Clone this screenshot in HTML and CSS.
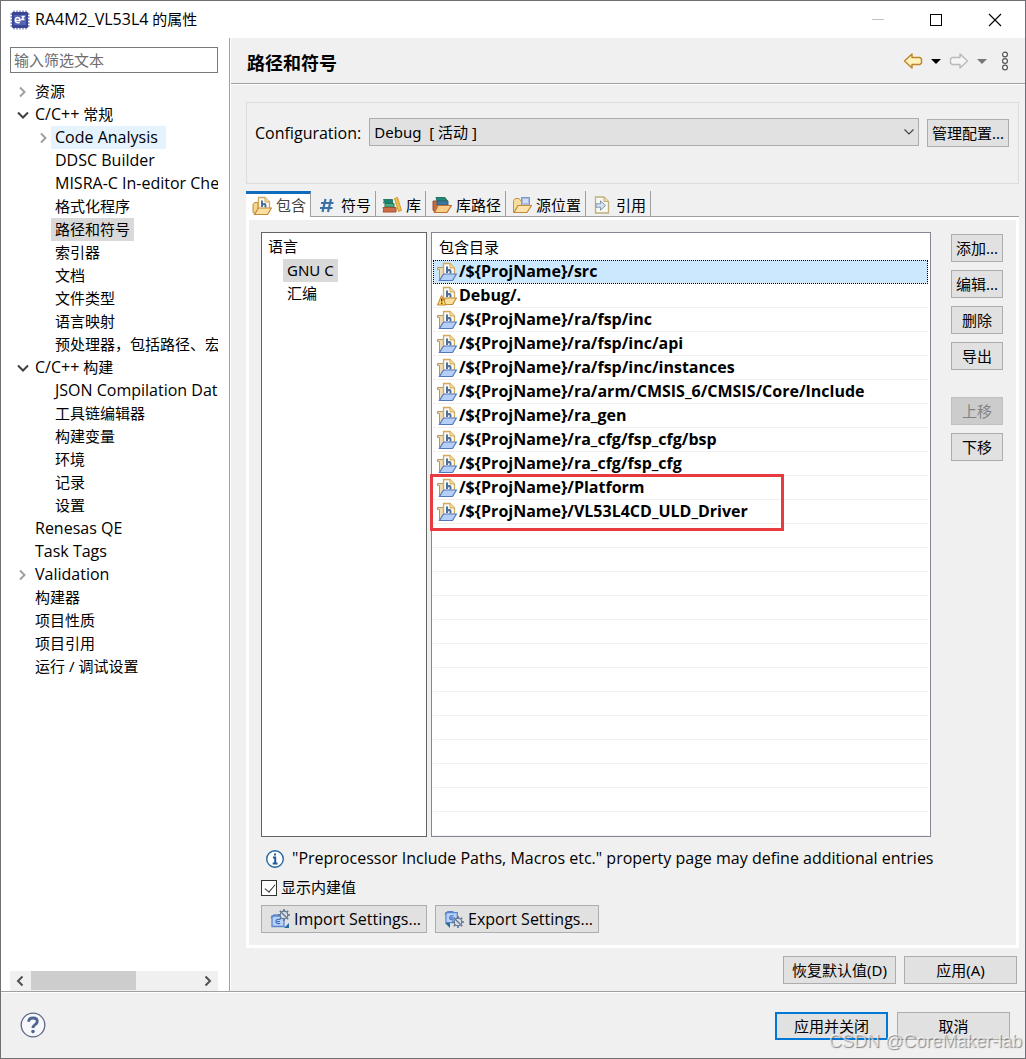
FILE: index.html
```html
<!DOCTYPE html>
<html lang="zh-CN">
<head>
  <meta charset="UTF-8" />
  <meta name="viewport" content="width=device-width, initial-scale=1.0"/>
  <title>RA4M2_VL53L4 的属性</title>
  <link rel="stylesheet" href="styles.css">
</head>
<body>
  <svg class="defs" width="0" height="0" aria-hidden="true">
    <symbol id="chev-right" viewBox="0 0 12 12"><path d="M3 1.5L7.5 6L3 10.5" fill="none" stroke="currentColor" stroke-width="2"/></symbol>
    <symbol id="chev-down" viewBox="0 0 12 12"><path d="M1 3.5L6 8.5L11 3.5" fill="none" stroke="currentColor" stroke-width="2"/></symbol>
    <symbol id="page-h" viewBox="0 0 20 20">
      <path d="M6.5 1.5H13L17.5 6V14H6.5Z" fill="#fdfbf3" stroke="#cfa95c" stroke-width="1.3"/>
      <path d="M13 1.5V6H17.5" fill="#f3dfa9" stroke="#cfa95c"/>
      <path d="M10 4.5V11M10 8.7Q13.5 6.8 13.5 9.5V11.5" fill="none" stroke="#4a6f9b" stroke-width="2"/>
    </symbol>
    <symbol id="inc-blue" viewBox="0 0 20 20">
      <path d="M.5 5.5H6.5V13L3.5 17.5H2.5V7.5H.5Z" fill="#ecdcb4" stroke="#b0986a"/>
      <use href="#page-h"/>
      <path d="M6.5 12H19.5L15.5 18.5H2.5Z" fill="#b4d0f8" stroke="#5577bd" stroke-width="1.2"/>
    </symbol>
    <symbol id="inc-gold" viewBox="0 0 20 20">
      <path d="M1 8.5L2.5 6.5H6V13L3 17.5L1 16.5Z" fill="#f3d58d" stroke="#b98d45"/>
      <use href="#page-h"/>
      <path d="M6.5 12H19.5L15.5 18.5H2.5Z" fill="#fbe0a0" stroke="#c08b3a" stroke-width="1.2"/>
    </symbol>
    <symbol id="inc-warn" viewBox="0 0 20 20">
      <use href="#page-h"/>
      <path d="M8 12H19.5L15.5 18.5H6Z" fill="#fbe0a0" stroke="#c08b3a" stroke-width="1.2"/>
      <path d="M4.5 9.5L9 19H.5Z" fill="#ffd869" stroke="#c5842b" stroke-linejoin="round"/>
      <path d="M4.7 12.5V15.5M4.7 16.5V18" stroke="#5a3208" stroke-width="1.3"/>
    </symbol>
    <symbol id="hash" viewBox="0 0 20 20"><path d="M8.5 4L5.5 17M14 4L11 17M4 8H16.5M3 13H15.5" fill="none" stroke="#3b72a5" stroke-width="2.2"/></symbol>
    <symbol id="books" viewBox="0 0 20 20">
      <path d="M1.5 4.5H10.5V8H1.5Q3 6 1.5 4.5Z" fill="#188473" stroke="#2c766c"/>
      <path d="M3 8.5H12V12H3Z" fill="#45ae83" stroke="#2b7759"/>
      <path d="M1 12.5H14V17H1Q2.5 15 1 12.5Z" fill="#cb6e45" stroke="#a5512f"/>
      <path d="M12.5 3.5L15.5 2.5L19.5 15.5L16.5 16.5Z" fill="#f2bd4b" stroke="#d39a35"/>
    </symbol>
    <symbol id="libpath" viewBox="0 0 20 20">
      <path d="M1 6H7V15L3 17.5L1 15Z" fill="#bf6c45" stroke="#97502f"/>
      <path d="M4 2.5H13L15.5 6H5Z" fill="#208b75" stroke="#2a6f63"/>
      <path d="M5 6H16V10H5Z" fill="#3e76a0" stroke="#315e7a"/>
      <path d="M6 10.5H19.5L15 17.5H2.5Z" fill="#f9cd88" stroke="#bd7035" stroke-width="1.2"/>
    </symbol>
    <symbol id="srcloc" viewBox="0 0 20 20">
      <path d="M1.5 17V5.5L3 3.5H7L9 6H16V16Z" fill="#f5dca0" stroke="#c19548"/>
      <rect x="9.5" y="2.5" width="8" height="8" fill="#a7bbe2" stroke="#7f98c6"/>
      <path d="M11 4H16V8H11Z" fill="#d0def6"/>
      <path d="M6 10.5H19.5L15 17.5H2Z" fill="#ffe3aa" stroke="#c08b3a" stroke-width="1.2"/>
    </symbol>
    <symbol id="refs" viewBox="0 0 20 20">
      <path d="M3.5 2H12L16.5 6.5V18H3.5Z" fill="#f9f8f0" stroke="#bfae7e" stroke-width="1.3"/>
      <path d="M12 2V6.5H16.5" fill="#e9d9a5" stroke="#bfae7e"/>
      <path d="M4 8.8H8.5V5.8L13.5 10.5L8.5 15.2V12.2H4Z" fill="#d8e3ee" stroke="#7f98ae"/>
    </symbol>
    <symbol id="gear-box" viewBox="0 0 20 20">
      <path d="M2 7H14V17.5H2Z" fill="#b7d1fa" stroke="#5b86cb" stroke-width="1.3"/>
      <path d="M1 9L4 6H10" fill="none" stroke="#5b86cb" stroke-width="1.5"/>
      <path d="M10.2 10.5Q6 9.5 6 12.5Q6 15 10.2 14.5M7 12.5H10" fill="none" stroke="#386dbb" stroke-width="1.2"/>
    </symbol>
    <symbol id="gear" viewBox="0 0 12 12">
      <path d="M6 0V12M0 6H12M1.8 1.8L10.2 10.2M10.2 1.8L1.8 10.2" stroke="#5f7590" stroke-width="1.6"/>
      <circle cx="6" cy="6" r="3.8" fill="#d7dee7" stroke="#5f7590" stroke-width="1.2"/>
      <path d="M3.5 3.5L8.5 8.5" stroke="#5f7590" stroke-width="1.3"/>
    </symbol>
  </svg>

  <div class="window">
    <header class="titlebar">
      <svg class="app-icon" viewBox="0 0 20 20">
        <path d="M4 .5V19.5M7 .5V19.5M10 .5V19.5M13 .5V19.5M16 .5V19.5M.5 4H19.5M.5 7H19.5M.5 10H19.5M.5 13H19.5M.5 16H19.5" stroke="#6d79b0" stroke-width="1.3"/>
        <rect x="2" y="2" width="16" height="16" rx="1" fill="#3a4799"/>
        <rect x="4" y="5" width="12" height="10" fill="#5665b2"/>
        <path d="M5.5 10.5H10Q10 7.5 7.7 7.5Q5.3 7.5 5.3 10.5Q5.3 13.3 9.7 12.5M11.5 6.5H14L11.8 9.5H14.5" fill="none" stroke="#fff" stroke-width="1.4"/>
      </svg>
      <span class="window-title"><span class="latin">RA4M2_VL53L4</span> 的属性</span>
      <button class="win-btn" aria-label="最小化" disabled><svg viewBox="0 0 14 14"><path d="M1 6.5H13" stroke="#c2c2c2"/></svg></button>
      <button class="win-btn" aria-label="最大化"><svg viewBox="0 0 14 14"><rect x="1.5" y="1.5" width="11" height="11" fill="none" stroke="#000"/></svg></button>
      <button class="win-btn" aria-label="关闭"><svg viewBox="0 0 14 14"><path d="M1 1L13 13M13 1L1 13" stroke="#000" stroke-width="1.1"/></svg></button>
    </header>

    <div class="content">
      <aside class="sidebar">
        <input class="filter" type="text" placeholder="输入筛选文本" aria-label="输入筛选文本">
        <ul class="tree">
          <li><svg class="arrow"><use href="#chev-right"/></svg><span class="item">资源</span></li>
          <li><svg class="arrow open"><use href="#chev-down"/></svg><span class="item"><span class="latin">C/C++</span> 常规</span>
            <ul>
              <li><svg class="arrow"><use href="#chev-right"/></svg><span class="item latin hover">Code Analysis</span></li>
              <li><span class="item latin">DDSC Builder</span></li>
              <li><span class="item latin">MISRA-C In-editor Checks</span></li>
              <li><span class="item">格式化程序</span></li>
              <li><span class="item selected">路径和符号</span></li>
              <li><span class="item">索引器</span></li>
              <li><span class="item">文档</span></li>
              <li><span class="item">文件类型</span></li>
              <li><span class="item">语言映射</span></li>
              <li><span class="item">预处理器，包括路径、宏</span></li>
            </ul>
          </li>
          <li><svg class="arrow open"><use href="#chev-down"/></svg><span class="item"><span class="latin">C/C++</span> 构建</span>
            <ul>
              <li><span class="item latin">JSON Compilation Database</span></li>
              <li><span class="item">工具链编辑器</span></li>
              <li><span class="item">构建变量</span></li>
              <li><span class="item">环境</span></li>
              <li><span class="item">记录</span></li>
              <li><span class="item">设置</span></li>
            </ul>
          </li>
          <li><span class="item latin">Renesas QE</span></li>
          <li><span class="item latin">Task Tags</span></li>
          <li><svg class="arrow"><use href="#chev-right"/></svg><span class="item latin">Validation</span></li>
          <li><span class="item">构建器</span></li>
          <li><span class="item">项目性质</span></li>
          <li><span class="item">项目引用</span></li>
          <li><span class="item">运行 / 调试设置</span></li>
        </ul>
        <div class="scrollbar">
          <button aria-label="向左滚动"><svg viewBox="0 0 12 12"><path d="M7.5 1.5L3 6L7.5 10.5" fill="none" stroke="#505050" stroke-width="2"/></svg></button>
          <div class="track"><div class="thumb"></div></div>
          <button aria-label="向右滚动"><svg viewBox="0 0 12 12"><path d="M3.5 1.5L8 6L3.5 10.5" fill="none" stroke="#505050" stroke-width="2"/></svg></button>
        </div>
      </aside>

      <main class="main">
        <div class="page-head">
          <h1>路径和符号</h1>
          <nav class="history">
            <button aria-label="后退"><svg width="20" height="18" viewBox="0 0 20 18"><path d="M1.5 9L9 2V5.5H17L18.5 7V11L17 12.5H9V16Z" fill="#fff2bd" stroke="#bd862c" stroke-width="1.5" stroke-linejoin="round"/></svg></button>
            <button aria-label="后退历史"><svg width="10" height="18" viewBox="0 0 10 18"><path d="M0 7H10L5 12Z" fill="#000"/></svg></button>
            <button aria-label="前进"><svg width="20" height="18" viewBox="0 0 20 18"><path d="M18.5 9L11 2V5.5H3L1.5 7V11L3 12.5H11V16Z" fill="#f5f5f5" stroke="#b9b9b9" stroke-width="1.4" stroke-linejoin="round"/></svg></button>
            <button aria-label="前进历史"><svg width="10" height="18" viewBox="0 0 10 18"><path d="M0 7H10L5 12Z" fill="#777"/></svg></button>
            <button class="more" aria-label="菜单"><svg width="8" height="20" viewBox="0 0 8 20"><g fill="#fff" stroke="#555" stroke-width="1.2"><circle cx="4" cy="3.5" r="2.4"/><circle cx="4" cy="10" r="2.4"/><circle cx="4" cy="16.5" r="2.4"/></g></svg></button>
          </nav>
        </div>

        <div class="page">
          <section class="config">
            <label class="latin" for="config">Configuration:</label>
            <div class="select-wrap">
              <select id="config"><option>Debug&nbsp; [ 活动 ]</option></select>
              <svg viewBox="0 0 12 12"><path d="M1.5 3.5L6 8L10.5 3.5" fill="none" stroke="#444" stroke-width="1.2"/></svg>
            </div>
            <button class="btn manage">管理配置...</button>
          </section>

          <div class="tabs" role="tablist">
            <button class="tab active" role="tab" aria-selected="true"><svg><use href="#inc-gold"/></svg>包含</button>
            <button class="tab" role="tab"><svg><use href="#hash"/></svg>符号</button>
            <button class="tab" role="tab"><svg><use href="#books"/></svg>库</button>
            <button class="tab" role="tab"><svg><use href="#libpath"/></svg>库路径</button>
            <button class="tab" role="tab"><svg><use href="#srcloc"/></svg>源位置</button>
            <button class="tab" role="tab"><svg><use href="#refs"/></svg>引用</button>
          </div>

          <section class="panel">
            <div class="lists">
              <div class="languages">
                <div class="lang-head">语言</div>
                <ul>
                  <li><span class="selected">GNU C</span></li>
                  <li><span>汇编</span></li>
                </ul>
              </div>
              <div class="includes">
                <table>
                  <thead><tr><th>包含目录</th></tr></thead>
                  <tbody class="latin">
                    <tr class="current"><td><svg><use href="#inc-blue"/></svg>/${ProjName}/src</td></tr>
                    <tr><td><svg><use href="#inc-warn"/></svg>Debug/.</td></tr>
                    <tr><td><svg><use href="#inc-blue"/></svg>/${ProjName}/ra/fsp/inc</td></tr>
                    <tr><td><svg><use href="#inc-blue"/></svg>/${ProjName}/ra/fsp/inc/api</td></tr>
                    <tr><td><svg><use href="#inc-blue"/></svg>/${ProjName}/ra/fsp/inc/instances</td></tr>
                    <tr><td><svg><use href="#inc-blue"/></svg>/${ProjName}/ra/arm/CMSIS_6/CMSIS/Core/Include</td></tr>
                    <tr><td><svg><use href="#inc-blue"/></svg>/${ProjName}/ra_gen</td></tr>
                    <tr><td><svg><use href="#inc-blue"/></svg>/${ProjName}/ra_cfg/fsp_cfg/bsp</td></tr>
                    <tr><td><svg><use href="#inc-blue"/></svg>/${ProjName}/ra_cfg/fsp_cfg</td></tr>
                    <tr><td><svg><use href="#inc-blue"/></svg>/${ProjName}/Platform</td></tr>
                    <tr><td><svg><use href="#inc-blue"/></svg>/${ProjName}/VL53L4CD_ULD_Driver</td></tr>
                  </tbody>
                </table>
                <div class="empty-rows"></div>
                <div class="marker"></div>
              </div>
              <div class="actions">
                <button class="btn">添加...</button>
                <button class="btn">编辑...</button>
                <button class="btn">删除</button>
                <button class="btn">导出</button>
                <button class="btn move" disabled>上移</button>
                <button class="btn">下移</button>
              </div>
            </div>

            <p class="info latin">
              <svg viewBox="0 0 20 20"><circle cx="10" cy="10" r="8.3" fill="#fff" stroke="#25669f" stroke-width="1.4"/><path d="M10 4.5V6.5M8 8.5H10.2V14M7.7 14.5H12.5" fill="none" stroke="#1a5b99" stroke-width="2"/></svg>
              "Preprocessor Include Paths, Macros etc." property page may define additional entries
            </p>
            <label class="builtin"><input type="checkbox" checked>显示内建值</label>
            <div class="transfer">
              <button class="btn latin"><svg viewBox="0 0 20 20"><use href="#gear-box" width="20" height="20"/><use href="#gear" x="8" y="0" width="12" height="12"/><path d="M19 14V19H14Z" fill="#276ba2"/></svg>Import Settings...</button>
              <button class="btn latin"><svg viewBox="0 0 20 20"><use href="#gear-box" x="0" y="-3" width="19" height="19"/><use href="#gear" x="8" y="7" width="12" height="12"/><path d="M1 14H6V19Z" fill="#276ba2"/></svg>Export Settings...</button>
            </div>
          </section>

          <div class="page-actions">
            <button class="btn">恢复默认值(D)</button>
            <button class="btn">应用(A)</button>
          </div>
        </div>
      </main>
    </div>

    <footer class="footer">
      <button class="help" aria-label="帮助"><svg viewBox="0 0 26 26"><circle cx="13" cy="13" r="11.8" fill="#f6f8fb" stroke="#5d6687" stroke-width="1.3"/><path d="M8.6 9.8Q8.8 6 13 6Q17.3 6 17.3 9.3Q17.3 11.2 15.2 12.6Q13 14 13 16" fill="none" stroke="#4f6690" stroke-width="2.8"/><circle cx="13" cy="19.5" r="1.8" fill="#4f6690"/></svg></button>
      <button class="btn primary">应用并关闭</button>
      <button class="btn">取消</button>
      <span class="watermark">CSDN @CoreMaker-lab</span>
    </footer>
  </div>
</body>
</html>
```

FILE: styles.css
```css
* {
  box-sizing: border-box;
}
body {
  margin: 0;
  font-family: "Noto Sans", "Noto Sans CJK SC", sans-serif;
  font-size: 15px;
  line-height: 23px;
  color: #000;
}
button, input, select {
  font: inherit;
  color: inherit;
}
button {
  padding: 0;
  border: none;
  background: none;
}
ul {
  list-style: none;
  margin: 0;
  padding: 0;
}
.defs {
  position: absolute;
}
.latin {
  font-family: "Open Sans", "Noto Sans", sans-serif;
  font-size: 16px;
}
.window {
  display: flex;
  flex-direction: column;
  min-height: 100vh;
  border: 1px solid #706f73;
  background: #f0f0f0;
}

/* title bar */
.titlebar {
  display: flex;
  align-items: center;
  height: 37px;
  padding-left: 9px;
  background: #fff;
}
.app-icon {
  width: 20px;
  height: 20px;
  margin-right: 5px;
}
.window-title {
  flex: 1;
}
.win-btn {
  display: flex;
  align-items: center;
  justify-content: center;
  width: 58px;
  height: 36px;
}
.win-btn svg {
  width: 14px;
  height: 14px;
}
.win-btn:last-child {
  width: 60px;
}

.content {
  flex: 1;
  display: flex;
}

/* tree */
.sidebar {
  display: flex;
  flex-direction: column;
  width: 229px;
  padding: 9px 11px 0 9px;
  background: #fff;
  border-right: 1px solid #a0a0a0;
}
.filter {
  width: 100%;
  height: 26px;
  padding: 0 3px;
  border: 1px solid #7a7a7a;
  border-radius: 0;
  background: #fff;
}
.filter::placeholder {
  color: #6d6d6d;
  opacity: 1;
}
.tree {
  flex: 1;
  margin-top: 7px;
  overflow: hidden;
  white-space: nowrap;
}
.tree li {
  position: relative;
  padding-left: 21px;
}
.tree ul li {
  padding-left: 20px;
}
.item {
  display: inline-block;
  height: 23px;
  padding: 0 4px;
  vertical-align: top;
}
.arrow {
  position: absolute;
  left: 7px;
  top: 6px;
  width: 12px;
  height: 12px;
  color: #a0a0a0;
}
.arrow.open {
  color: #404040;
}
.hover {
  padding-right: 8px;
  background: #e5f3ff;
}
.selected {
  background: #d9d9d9;
}
.scrollbar {
  display: flex;
  height: 20px;
  background: #f0f0f0;
}
.scrollbar button {
  width: 21px;
  display: flex;
  align-items: center;
  justify-content: center;
}
.scrollbar svg {
  width: 12px;
  height: 12px;
}
.track {
  flex: 1;
}
.thumb {
  width: 63%;
  height: 19px;
  background: #cdcdcd;
}

/* right side */
.main {
  flex: 1;
  min-width: 0;
  display: flex;
  flex-direction: column;
  border-left: 1px solid #fff;
}
.page-head {
  display: flex;
  align-items: center;
  justify-content: space-between;
  height: 46px;
  padding: 0 16px;
  border-bottom: 1px solid #a0a0a0;
  box-shadow: 0 1px #fff;
}
h1 {
  margin: 4px 0 0;
  font-size: 18px;
  line-height: 24px;
}
.history {
  display: flex;
  align-items: center;
  gap: 8px;
}
.history button, .history svg {
  display: block;
}
.history .more {
  margin-left: 6px;
}
.page {
  flex: 1;
  display: flex;
  flex-direction: column;
  padding: 18px 6px 7px 15px;
}
.config {
  display: flex;
  align-items: flex-start;
  gap: 8px;
  height: 82px;
  padding: 15px 9px 0 8px;
  border: 1px solid #dcdcdc;
}
.config label {
  margin-top: 4px;
}
.select-wrap {
  flex: 1;
  display: grid;
  align-items: center;
}
.select-wrap > * {
  grid-area: 1 / 1;
}
.select-wrap select {
  appearance: none;
  height: 28px;
  padding: 0 4px;
  border: 1px solid #adadad;
  border-radius: 0;
  background: #e1e1e1;
}
.select-wrap svg {
  justify-self: end;
  width: 12px;
  height: 12px;
  margin-right: 4px;
  pointer-events: none;
}
.btn {
  display: flex;
  align-items: center;
  justify-content: center;
  height: 28px;
  border: 1px solid #adadad;
  background: #e1e1e1;
  white-space: nowrap;
}
.btn:disabled {
  background: #ccc;
  border-color: #bfbfbf;
  color: #838383;
}
.manage {
  width: 82px;
  margin-top: 1px;
}

/* tabs */
.tabs {
  display: flex;
  height: 26px;
  margin-top: 7px;
  border-bottom: 1px solid #a0a0a0;
}
.tab {
  display: flex;
  align-items: center;
  gap: 4px;
  height: 25px;
  padding: 3px 4px 0 6px;
  border-right: 1px solid #a0a0a0;
}
.tab svg {
  width: 20px;
  height: 20px;
}
.tab.active {
  height: 26px;
  padding-top: 0;
  border-top: 3px solid #0f6cbd;
  background: #fff;
  color: #444;
}
.panel {
  flex: 1;
  display: flex;
  flex-direction: column;
  padding: 12px 13px 12px 12px;
  border: 3px solid #fff;
}
.lists {
  flex: 1;
  display: flex;
}
.languages {
  width: 166px;
  padding: 2px 6px;
  border: 1px solid #646464;
  background: #fff;
}
.languages ul {
  margin-top: 1px;
}
.languages li {
  padding-left: 15px;
}
.languages span {
  display: inline-block;
  padding: 0 4px;
  vertical-align: top;
}
.includes {
  position: relative;
  flex: 1;
  display: flex;
  flex-direction: column;
  margin: 0 20px 0 4px;
  padding: 0 2px 0 1px;
  border: 1px solid #828790;
  background: #fff;
}
.includes table {
  width: 100%;
  border-spacing: 0;
}
.includes th {
  height: 27px;
  padding: 2px 6px 0;
  font-weight: normal;
  text-align: left;
}
.includes td {
  height: 24px;
  padding: 0 4px;
  border-bottom: 1px solid #f0f0f0;
  font-weight: bold;
  white-space: nowrap;
}
.includes td svg {
  width: 20px;
  height: 20px;
  margin: 2px 2px 0 0;
  vertical-align: top;
}
.includes .current td {
  background: #cce8ff;
  outline: 1px dotted #000;
  outline-offset: -1px;
}
.empty-rows {
  flex: 1;
  background: repeating-linear-gradient(#fff 0 23px, #f0f0f0 23px 24px);
}
.marker {
  position: absolute;
  left: -2px;
  top: 241px;
  width: 354px;
  height: 57px;
  border: 3px solid #e83b3f;
}
.actions {
  display: flex;
  flex-direction: column;
  gap: 8px;
  width: 52px;
  padding-top: 2px;
}
.actions .move {
  margin-top: 19px;
}
.info {
  display: flex;
  align-items: center;
  gap: 7px;
  margin: 10px 0 6px 4px;
}
.info svg {
  width: 20px;
  height: 20px;
}
.builtin {
  display: flex;
  align-items: center;
  gap: 4px;
}
.builtin input {
  appearance: none;
  width: 16px;
  height: 16px;
  margin: 0;
  border: 1px solid #333;
  background: #fff;
}
.builtin input:checked::before {
  content: "";
  display: block;
  width: 5px;
  height: 9px;
  margin: 1px 0 0 5px;
  border: solid #333;
  border-width: 0 1px 1px 0;
  transform: rotate(40deg);
}
.transfer {
  display: flex;
  gap: 8px;
  margin-top: 6px;
}
.transfer .btn {
  gap: 4px;
  padding: 0 5px 0 8px;
}
.transfer svg {
  width: 20px;
  height: 20px;
}
.page-actions {
  display: flex;
  justify-content: flex-end;
  gap: 8px;
  margin: 8px 2px 0 0;
}
.page-actions .btn, .footer .btn {
  width: 113px;
}

/* bottom bar */
.footer {
  position: relative;
  display: flex;
  align-items: center;
  gap: 9px;
  height: 67px;
  padding: 0 15px 0 19px;
  border-top: 1px solid #a0a0a0;
  box-shadow: inset 0 1px #fff;
}
.footer .btn {
  margin-top: 2px;
}
.help {
  width: 26px;
  height: 26px;
  margin-right: auto;
}
.help svg {
  display: block;
}
.footer .primary {
  border: 2px solid #0078d7;
}
.watermark {
  position: absolute;
  right: 3px;
  bottom: 5px;
  font-family: "Liberation Sans", Arial, sans-serif;
  font-size: 18px;
  color: rgba(255, 255, 255, 0.6);
  text-shadow: 1px 1px 1px rgba(90, 90, 90, 0.7);
}
```
